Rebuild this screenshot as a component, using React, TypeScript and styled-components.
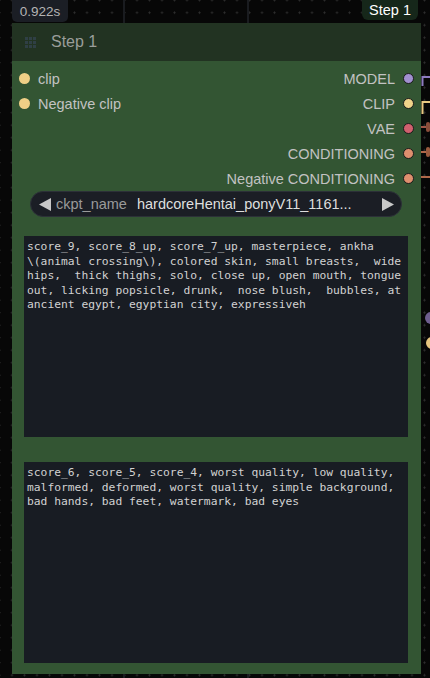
import React from "react";
import styled, { createGlobalStyle } from "styled-components";

const Global = createGlobalStyle`
  html, body { margin: 0; padding: 0; background: #070707; }
  body { width: 430px; height: 678px; overflow: hidden; }
  * { box-sizing: border-box; }
`;

const Canvas = styled.div`
  position: relative;
  width: 430px;
  height: 678px;
  overflow: hidden;
  background-color: #070707;
  background-image:
    linear-gradient(
      to right,
      transparent 123px,
      #1a1c20 123px,
      #1a1c20 125px,
      transparent 125px,
      transparent 247px,
      #1a1c20 247px,
      #1a1c20 249px,
      transparent 249px
    ),
    radial-gradient(circle, #2e2e2e 0.9px, transparent 1.1px);
  background-size: 100% 100%, 12.5px 12.5px;
  background-repeat: no-repeat, repeat;
  background-position: 0 0, 5.75px 6.45px;
  display: flex;
  flex-direction: column;
  align-items: flex-start;
`;

const TimerBadge = styled.div`
  position: absolute;
  left: 12px;
  top: 0;
  width: 56px;
  height: 22px;
  border-radius: 0 0 5px 5px;
  background: #1b1e25;
  color: #b4b4b4;
  font: 13.5px "Liberation Sans", Arial, sans-serif;
  display: flex;
  align-items: center;
  justify-content: center;
  z-index: 2;
`;

const StepBadge = styled.div`
  position: absolute;
  left: 362px;
  top: -6px;
  width: 56px;
  height: 26px;
  padding-top: 6px;
  border-radius: 6px;
  background: #16271a;
  color: #ffffff;
  font: 14.5px "Liberation Sans", Arial, sans-serif;
  display: flex;
  align-items: center;
  justify-content: center;
  z-index: 2;
`;

const Wires = styled.svg`
  position: absolute;
  left: 418px;
  top: 60px;
  width: 12px;
  height: 300px;
  overflow: visible;
`;

const Node = styled.section`
  position: relative;
  z-index: 1;
  margin: 23px 0 0 12px;
  width: 409px;
  height: 651px;
  display: flex;
  flex-direction: column;
  background: #335533;
  font-family: "Liberation Sans", Arial, sans-serif;
`;

const TitleBar = styled.header`
  height: 38px;
  flex: none;
  display: flex;
  align-items: center;
  gap: 14px;
  padding-left: 13px;
  background: #223322;
  color: #9a9e9a;
  font-size: 16px;
`;

const Body = styled.div`
  flex: 1;
  display: flex;
  flex-direction: column;
  padding: 5px 0 12px;
`;

const Slots = styled.div`
  display: grid;
  grid-template-columns: 1fr 1fr;
  padding: 0 7px;
  height: 125px;
  flex: none;
`;

const SlotColumn = styled.div<{ $side: "in" | "out" }>`
  display: flex;
  flex-direction: column;
  align-items: ${(p) => (p.$side === "in" ? "flex-start" : "flex-end")};
`;

const SlotRow = styled.div<{ $side: "in" | "out" }>`
  height: 25px;
  display: flex;
  align-items: center;
  gap: 8px;
  flex-direction: ${(p) => (p.$side === "in" ? "row" : "row-reverse")};
  color: #c2c2c2;
  font-size: 14.5px;
  white-space: nowrap;
`;

const SlotDot = styled.span<{ $color: string; $outlined?: boolean }>`
  width: 11px;
  height: 11px;
  border-radius: 50%;
  flex: none;
  background: ${(p) => p.$color};
  border: ${(p) => (p.$outlined ? "1.5px solid #1a1a1a" : "none")};
`;

const Combo = styled.div`
  height: 26px;
  flex: none;
  margin: 0 19px 0 18px;
  display: flex;
  align-items: center;
  padding: 0 7px 0 8px;
  border-radius: 13px;
  background: #1b1e25;
  border: 1px solid #2c3038;
  font-size: 14.5px;
  white-space: nowrap;
`;

const ComboLabel = styled.span`
  color: #9a9a9a;
  margin-left: 5px;
`;

const ComboValue = styled.span`
  color: #dedede;
  margin-left: 10px;
  flex: 1;
  overflow: hidden;
`;

const Arrow = styled.svg`
  width: 12px;
  height: 13px;
  flex: none;
  fill: #c8c8c8;
`;

const Prompt = styled.textarea<{ $gap: number }>`
  display: block;
  flex: none;
  height: 201px;
  margin: ${(p) => p.$gap}px 13px 0 12px;
  width: 384px;
  padding: 4px 3px 2px;
  border: none;
  outline: none;
  resize: none;
  overflow: hidden;
  background: #181c23;
  color: #d2d2d2;
  font-family: "DejaVu Sans Mono", "Liberation Mono", monospace;
  font-size: 11.3px;
  line-height: 14.5px;
  white-space: pre-wrap;
`;

const GripIcon = () => (
  <svg width="12" height="11" viewBox="0 0 12 11">
    {[0, 1, 2].map((r) =>
      [0, 1, 2].map((c) => (
        <rect key={`${r}-${c}`} x={c * 4} y={r * 4} width="3" height="3" fill="#2f3f45" />
      ))
    )}
  </svg>
);

// word joiner keeps "\(" together as in the reference wrapping
const positive =
  "score_9, score_8_up, score_7_up, masterpiece, ankha \\\u2060(animal crossing\\), colored skin, small breasts,  wide hips,  thick thighs, solo, close up, open mouth, tongue out, licking popsicle, drunk,  nose blush,  bubbles, at ancient egypt, egyptian city, expressiveh";

const negative =
  "score_6, score_5, score_4, worst quality, low quality, malformed, deformed, worst quality, simple background, bad hands, bad feet, watermark, bad eyes";

const inputs = [
  { name: "clip", color: "#efcf86" },
  { name: "Negative clip", color: "#efcf86" },
];

const outputs = [
  { name: "MODEL", color: "#a190d0" },
  { name: "CLIP", color: "#f0d38a" },
  { name: "VAE", color: "#d0606e" },
  { name: "CONDITIONING", color: "#de8f6e" },
  { name: "Negative CONDITIONING", color: "#de8f6e" },
];

export default function App() {
  return (
    <>
      <Global />
      <Canvas>
        <TimerBadge>0.922s</TimerBadge>
        <StepBadge>Step 1</StepBadge>

        <Wires viewBox="0 0 12 300">
          <path d="M4.5 26 V17 H12" stroke="#8d7cc0" strokeWidth="2" fill="none" />
          <path d="M4.5 54 V42 H12" stroke="#e8c981" strokeWidth="2" fill="none" />
          <path d="M3 67 H9" stroke="#a05848" strokeWidth="2" />
          <rect x="8" y="62" width="4" height="10" rx="2" fill="#8a4d3a" />
          <path d="M3 92 H9" stroke="#b0684a" strokeWidth="2" />
          <rect x="8" y="87" width="4" height="10" rx="2" fill="#9a5a3e" />
          <path d="M3 117 H12" stroke="#b0684a" strokeWidth="2" />
          <circle cx="13" cy="258" r="6" fill="#6e5e8e" />
          <circle cx="14" cy="283" r="6" fill="#e5c57f" />
        </Wires>

        <Node>
          <TitleBar>
            <GripIcon />
            <span>Step 1</span>
          </TitleBar>
          <Body>
            <Slots>
              <SlotColumn $side="in">
                {inputs.map((s) => (
                  <SlotRow $side="in" key={s.name}>
                    <SlotDot $color={s.color} />
                    <span>{s.name}</span>
                  </SlotRow>
                ))}
              </SlotColumn>
              <SlotColumn $side="out">
                {outputs.map((s) => (
                  <SlotRow $side="out" key={s.name}>
                    <SlotDot $color={s.color} $outlined />
                    <span>{s.name}</span>
                  </SlotRow>
                ))}
              </SlotColumn>
            </Slots>
            <Combo>
              <Arrow viewBox="0 0 12 13">
                <path d="M0 6.5 L12 0 L12 13 Z" />
              </Arrow>
              <ComboLabel>ckpt_name</ComboLabel>
              <ComboValue>hardcoreHentai_ponyV11_1161...</ComboValue>
              <Arrow viewBox="0 0 12 13">
                <path d="M12 6.5 L0 0 L0 13 Z" />
              </Arrow>
            </Combo>
            <Prompt $gap={19} readOnly value={positive} spellCheck={false} />
            <Prompt $gap={25} readOnly value={negative} spellCheck={false} />
          </Body>
        </Node>
      </Canvas>
    </>
  );
}
